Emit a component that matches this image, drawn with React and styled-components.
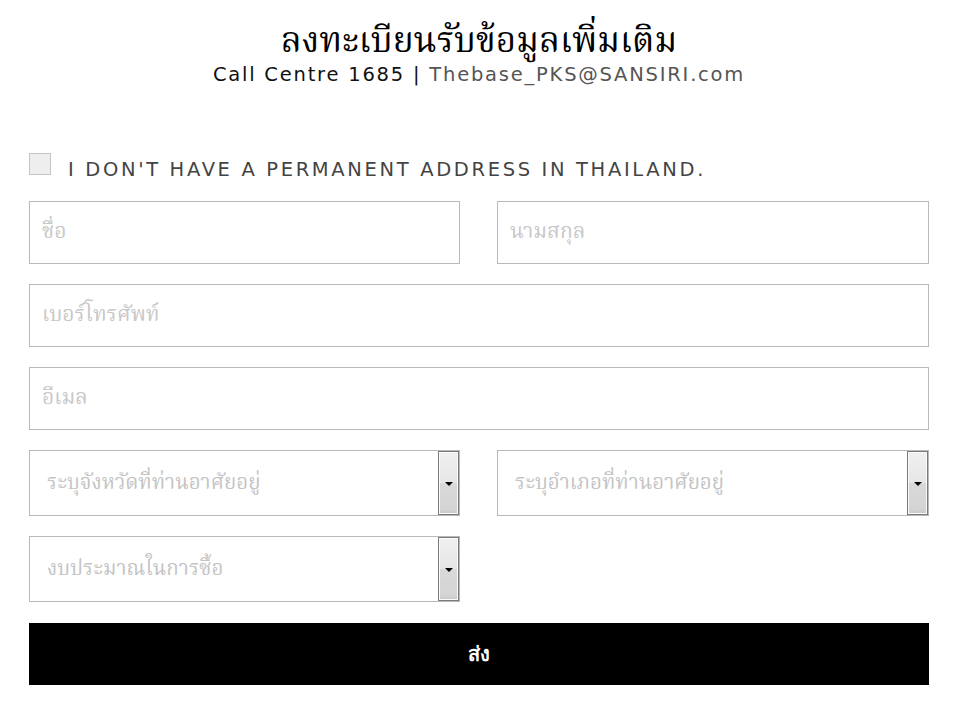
import React from "react";
import styled, { createGlobalStyle } from "styled-components";

const Global = createGlobalStyle`
  html, body { margin: 0; padding: 0; background: #fff; }
  body { font-family: "Liberation Serif", serif; }
  * { box-sizing: border-box; }
`;

const thaiSerif = `"Liberation Serif", "Noto Serif Thai", "Noto Serif", serif`;
const thaiFieldSerif = `"Noto Serif Thai", "Liberation Serif", serif`;
const wideSans = `"DejaVu Sans", "Liberation Sans", sans-serif`;

const Page = styled.div`
  width: 900px;
  margin-left: 29px;
  padding-top: 19px;
`;

const Header = styled.header`
  text-align: center;
`;

const Title = styled.h1`
  margin: 0;
  font-family: ${thaiSerif};
  font-weight: normal;
  font-size: 35px;
  line-height: 44px;
  color: #000;
`;

const Contact = styled.p`
  margin: 0;
  font-family: ${wideSans};
  font-size: 19.5px;
  line-height: 24px;
  color: #111;
  letter-spacing: 1.78px;
`;

const Email = styled.span`
  color: #555;
`;

const CheckRow = styled.label`
  display: flex;
  align-items: center;
  gap: 17px;
  margin-top: 65px;
  height: 23px;
  cursor: pointer;
`;

const Box = styled.span`
  width: 22px;
  height: 22px;
  background: #eeeeee;
  border: 1px solid #c4c4c4;
  flex: none;
`;

const CheckText = styled.span`
  font-family: ${wideSans};
  font-size: 19.5px;
  color: #444;
  text-transform: uppercase;
  letter-spacing: 2.65px;
  padding-top: 11px;
  white-space: nowrap;
`;

const Form = styled.form`
  display: flex;
  flex-direction: column;
  gap: 20px;
  margin-top: 26px;
`;

const Row = styled.div`
  display: grid;
  grid-template-columns: ${(p) => (p.$cols === 2 ? "431px 432px" : "1fr")};
  column-gap: 37px;
`;

const HalfRow = styled.div`
  display: grid;
  grid-template-columns: 431px;
`;

const Input = styled.input`
  width: 100%;
  height: 63px;
  border: 1px solid #b9b9b9;
  padding: 0 12px;
  font-family: ${thaiFieldSerif};
  font-size: 21px;
  color: #333;
  background: #fff;
  outline: none;
  &::placeholder { color: #c8c8c8; font-family: ${thaiFieldSerif}; }
`;

const SelectWrap = styled.div`
  position: relative;
  height: 66px;
`;

const Select = styled.select`
  appearance: none;
  width: 100%;
  height: 100%;
  border: 1px solid #b9b9b9;
  padding: 0 30px 0 17px;
  font-family: ${thaiFieldSerif};
  font-size: 20.5px;
  color: #c4c4c4;
  background: #fff;
  outline: none;
  border-radius: 0;
`;

const ArrowBtn = styled.span`
  position: absolute;
  top: 1px;
  right: 1px;
  bottom: 1px;
  width: 21px;
  border: 1px solid #7a7a7a;
  box-shadow: inset 0 0 0 1px #fafafa;
  background: linear-gradient(#f0f0f0 0%, #e6e6e6 50%, #d9d9d9 50%, #d4d4d4 92%, #c8c8c8 100%);
  display: flex;
  align-items: center;
  justify-content: center;
  pointer-events: none;
`;

const Tri = styled.span`
  width: 0;
  height: 0;
  border-left: 4px solid transparent;
  border-right: 4px solid transparent;
  border-top: 4px solid #000;
  margin-top: 1px;
`;

const Submit = styled.button`
  margin-top: 1px;
  height: 62px;
  width: 100%;
  background: #000;
  color: #fff;
  border: none;
  font-family: "Liberation Sans", sans-serif;
  font-weight: bold;
  font-size: 20px;
  cursor: pointer;
`;

function Dropdown({ placeholder }) {
  return (
    <SelectWrap>
      <Select defaultValue="">
        <option value="" disabled>{placeholder}</option>
      </Select>
      <ArrowBtn><Tri /></ArrowBtn>
    </SelectWrap>
  );
}

export default function App() {
  return (
    <>
      <Global />
      <Page>
        <Header>
          <Title>ลงทะเบียนรับข้อมูลเพิ่มเติม</Title>
          <Contact>
            Call Centre 1685 | <Email>Thebase_PKS@SANSIRI.com</Email>
          </Contact>
        </Header>
        <CheckRow>
          <Box />
          <CheckText>I don't have a permanent address in Thailand.</CheckText>
        </CheckRow>
        <Form onSubmit={(e) => e.preventDefault()}>
          <Row $cols={2}>
            <Input placeholder="ชื่อ" />
            <Input placeholder="นามสกุล" />
          </Row>
          <Row>
            <Input placeholder="เบอร์โทรศัพท์" />
          </Row>
          <Row>
            <Input placeholder="อีเมล" />
          </Row>
          <Row $cols={2}>
            <Dropdown placeholder="ระบุจังหวัดที่ท่านอาศัยอยู่" />
            <Dropdown placeholder="ระบุอำเภอที่ท่านอาศัยอยู่" />
          </Row>
          <HalfRow>
            <Dropdown placeholder="งบประมาณในการซื้อ" />
          </HalfRow>
          <Submit type="submit">ส่ง</Submit>
        </Form>
      </Page>
    </>
  );
}
